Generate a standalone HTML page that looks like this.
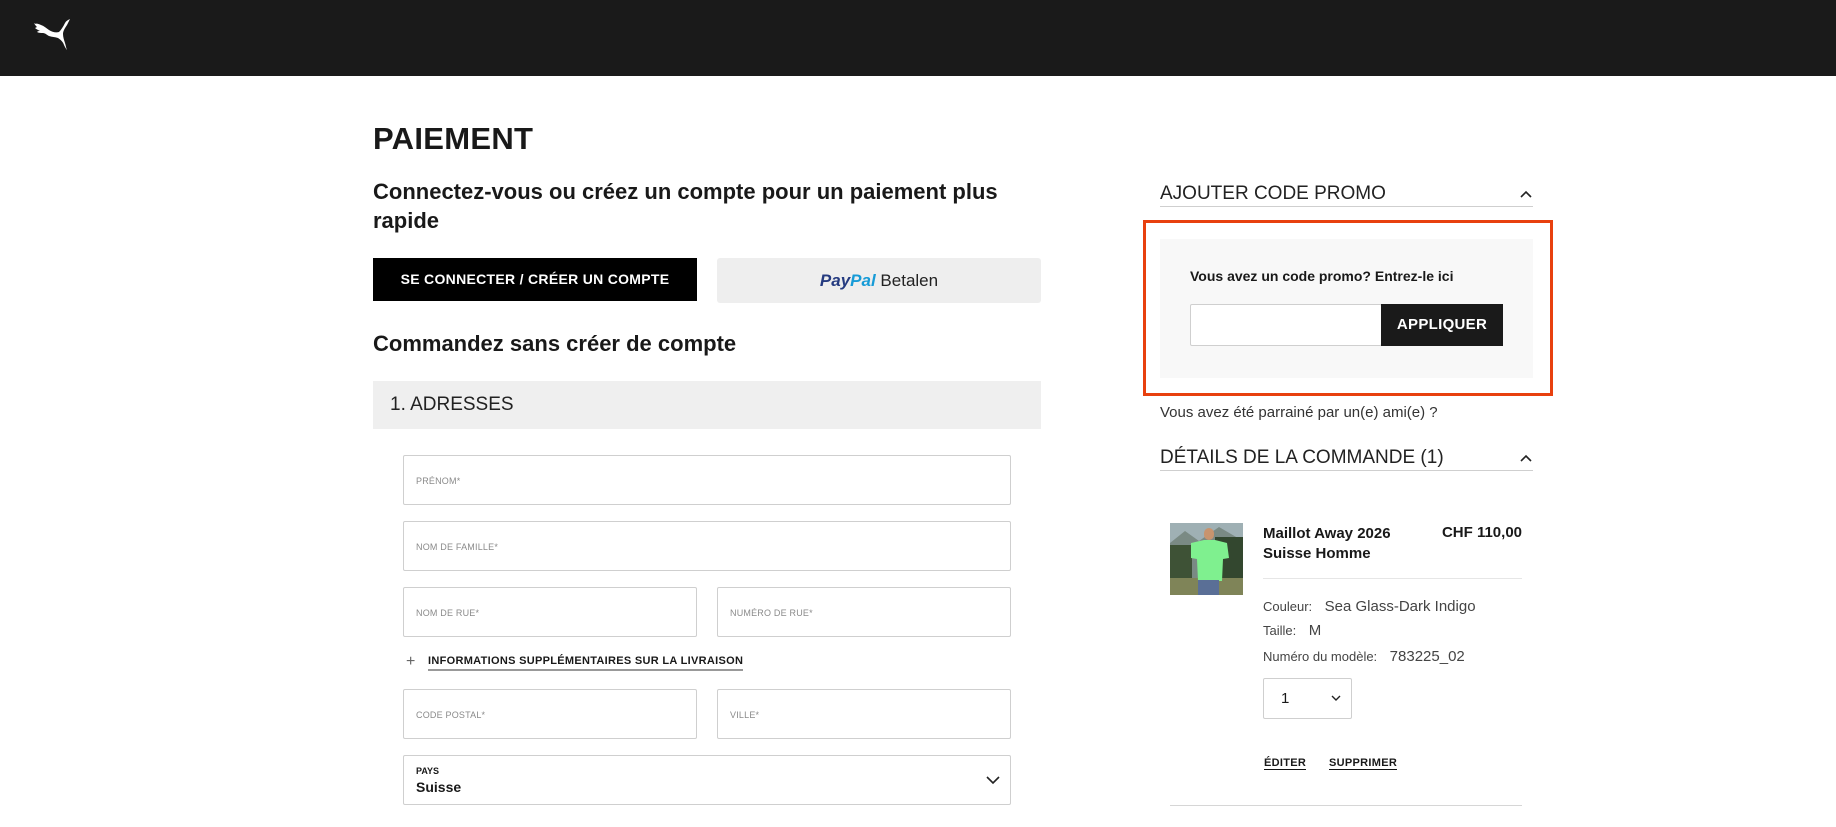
<!DOCTYPE html>
<html><head><meta charset="utf-8">
<style>
*{box-sizing:border-box;margin:0;padding:0}
body{width:1836px;height:827px;background:#fff;font-family:"Liberation Sans",sans-serif;color:#191919;position:relative;overflow:hidden}
.a{position:absolute}
.hdr{left:0;top:0;width:1836px;height:76px;background:#1a1a1a}
.inp{position:absolute;border:1px solid #cfcfcf;border-radius:2px;background:#fff}
.lbl{position:absolute;left:12px;top:20px;font-size:9px;color:#8a8a8a;letter-spacing:.2px}
.sec{font-size:19px;color:#222;font-weight:300}
.line{position:absolute;height:1px;background:#cfcfcf}
</style></head><body>
<div class="a hdr">
<svg class="a" style="left:32px;top:18px" width="42" height="36" viewBox="0 0 42 36"><path fill="#fff" d="M2 6c3-1 5 0 7 1 3 1 5 3 8 5 3 2 7 3 10 2 2-2 4-5 6-9 1-2 3-3 5-4-1 2-2 4-3 6-2 3-4 6-4 9 0 3 1 6 2 9 1 3 1 5 2 7-1-1-2-3-3-5-1-3-3-5-6-7-3-1-6-1-9-2-2-1-4-3-6-3-2 0-4 0-6-1 1-1 2-1 3-1-2-1-4-2-5-3l2-1c-1-1-2-2-3-4z"/></svg>
</div>

<div class="a" style="left:373px;top:121px;font-size:31px;font-weight:bold;letter-spacing:.3px">PAIEMENT</div>
<div class="a" style="left:373px;top:177px;width:660px;font-size:22px;font-weight:bold;line-height:29px">Connectez-vous ou créez un compte pour un paiement plus rapide</div>
<div class="a" style="left:373px;top:258px;width:324px;height:43px;background:#000;color:#fff;font-size:14px;font-weight:bold;text-align:center;line-height:43px;letter-spacing:.3px">SE CONNECTER / CRÉER UN COMPTE</div>
<div class="a" style="left:717px;top:258px;width:324px;height:45px;background:#eeeeee;border-radius:3px;text-align:center;line-height:45px;font-size:17px"><span style="font-weight:bold;font-style:italic;color:#253b80">Pay</span><span style="font-weight:bold;font-style:italic;color:#179bd7">Pal</span> <span style="color:#222">Betalen</span></div>
<div class="a" style="left:373px;top:331px;font-size:22px;font-weight:bold">Commandez sans créer de compte</div>
<div class="a" style="left:373px;top:381px;width:668px;height:48px;background:#efefef"><div class="a sec" style="left:17px;top:13px">1. ADRESSES</div></div>

<div class="inp" style="left:403px;top:455px;width:608px;height:50px"><div class="lbl">PRÉNOM*</div></div>
<div class="inp" style="left:403px;top:521px;width:608px;height:50px"><div class="lbl">NOM DE FAMILLE*</div></div>
<div class="inp" style="left:403px;top:587px;width:294px;height:50px"><div class="lbl">NOM DE RUE*</div></div>
<div class="inp" style="left:717px;top:587px;width:294px;height:50px"><div class="lbl">NUMÉRO DE RUE*</div></div>
<div class="a" style="left:406px;top:653px;font-size:16px;color:#666">+</div>
<div class="a" style="left:428px;top:655px;font-size:11px;font-weight:bold;letter-spacing:.3px;border-bottom:2px solid #999;padding-bottom:2px">INFORMATIONS SUPPLÉMENTAIRES SUR LA LIVRAISON</div>
<div class="inp" style="left:403px;top:689px;width:294px;height:50px"><div class="lbl">CODE POSTAL*</div></div>
<div class="inp" style="left:717px;top:689px;width:294px;height:50px"><div class="lbl">VILLE*</div></div>
<div class="inp" style="left:403px;top:755px;width:608px;height:50px"><div class="a" style="left:12px;top:10px;font-size:9px;font-weight:bold">PAYS</div><div class="a" style="left:12px;top:23px;font-size:14px;font-weight:bold">Suisse</div>
<svg class="a" style="left:582px;top:20px" width="14" height="9" viewBox="0 0 14 9"><path d="M1 1l6 6 6-6" fill="none" stroke="#222" stroke-width="1.6"/></svg></div>

<!-- right column -->
<div class="a sec" style="left:1160px;top:183px">AJOUTER CODE PROMO</div>
<svg class="a" style="left:1520px;top:190px" width="12" height="8" viewBox="0 0 12 8"><path d="M1 7l5-5 5 5" fill="none" stroke="#222" stroke-width="1.6"/></svg>
<div class="line" style="left:1160px;top:206px;width:373px"></div>
<div class="a" style="left:1143px;top:220px;width:410px;height:176px;border:3px solid #e8400f"></div>
<div class="a" style="left:1160px;top:239px;width:373px;height:139px;background:#f8f8f8"></div>
<div class="a" style="left:1190px;top:268px;font-size:14px;font-weight:bold">Vous avez un code promo? Entrez-le ici</div>
<div class="a" style="left:1190px;top:304px;width:192px;height:42px;background:#fff;border:1px solid #cfcfcf;border-radius:2px"></div>
<div class="a" style="left:1381px;top:304px;width:122px;height:42px;background:#1a1a1a;color:#fff;font-size:15px;font-weight:bold;text-align:center;line-height:42px;letter-spacing:.3px">APPLIQUER</div>
<div class="a" style="left:1160px;top:404px;font-size:15px;color:#333">Vous avez été parrainé par un(e) ami(e) ?</div>
<div class="a sec" style="left:1160px;top:447px">DÉTAILS DE LA COMMANDE (1)</div>
<svg class="a" style="left:1520px;top:454px" width="12" height="8" viewBox="0 0 12 8"><path d="M1 7l5-5 5 5" fill="none" stroke="#222" stroke-width="1.6"/></svg>
<div class="line" style="left:1160px;top:470px;width:373px"></div>

<svg class="a" style="left:1170px;top:523px" width="73" height="72" viewBox="0 0 73 72">
<rect width="73" height="72" fill="#9fb0b4"/>
<path d="M0 20l15-12 14 10 20-14 24 14v52H0z" fill="#7a8a84"/>
<rect x="45" y="14" width="28" height="42" fill="#33472f"/>
<rect x="0" y="22" width="22" height="34" fill="#3e5236"/>
<rect y="55" width="73" height="17" fill="#7f8458"/>
<rect x="34" y="5" width="10" height="12" rx="5" fill="#c8946e"/>
<path d="M21 20l13-3h11l12 3 2 15-6 1-1 22H28l-1-22-6-1z" fill="#7ff08f"/>
<rect x="28" y="57" width="21" height="15" fill="#5a6f96"/>
</svg>
<div class="a" style="left:1263px;top:524px;font-size:15px;font-weight:bold;line-height:20px">Maillot Away 2026<br>Suisse Homme</div>
<div class="a" style="left:1440px;top:524px;width:82px;text-align:right;font-size:15px;font-weight:bold">CHF 110,00</div>
<div class="line" style="left:1263px;top:578px;width:259px;background:#e6e6e6"></div>
<div class="a" style="left:1263px;top:598px;font-size:15px;color:#444"><span style="font-size:13px">Couleur:</span>&nbsp;&nbsp; Sea Glass-Dark Indigo</div>
<div class="a" style="left:1263px;top:622px;font-size:15px;color:#444"><span style="font-size:13px">Taille:</span>&nbsp;&nbsp; M</div>
<div class="a" style="left:1263px;top:648px;font-size:15px;color:#444"><span style="font-size:13px">Numéro du modèle:</span>&nbsp;&nbsp; 783225_02</div>
<div class="a" style="left:1263px;top:678px;width:89px;height:41px;border:1px solid #cfcfcf;border-radius:2px"><div class="a" style="left:17px;top:11px;font-size:15px">1</div>
<svg class="a" style="left:67px;top:16px" width="10" height="7" viewBox="0 0 10 7"><path d="M1 1l4 4 4-4" fill="none" stroke="#222" stroke-width="1.4"/></svg></div>
<div class="a" style="left:1264px;top:757px;font-size:11px;font-weight:bold;border-bottom:1px solid #111;letter-spacing:.3px">ÉDITER</div>
<div class="a" style="left:1329px;top:757px;font-size:11px;font-weight:bold;border-bottom:1px solid #111;letter-spacing:.3px">SUPPRIMER</div>
<div class="line" style="left:1170px;top:805px;width:352px;background:#d6d6d6"></div>
</body></html>
